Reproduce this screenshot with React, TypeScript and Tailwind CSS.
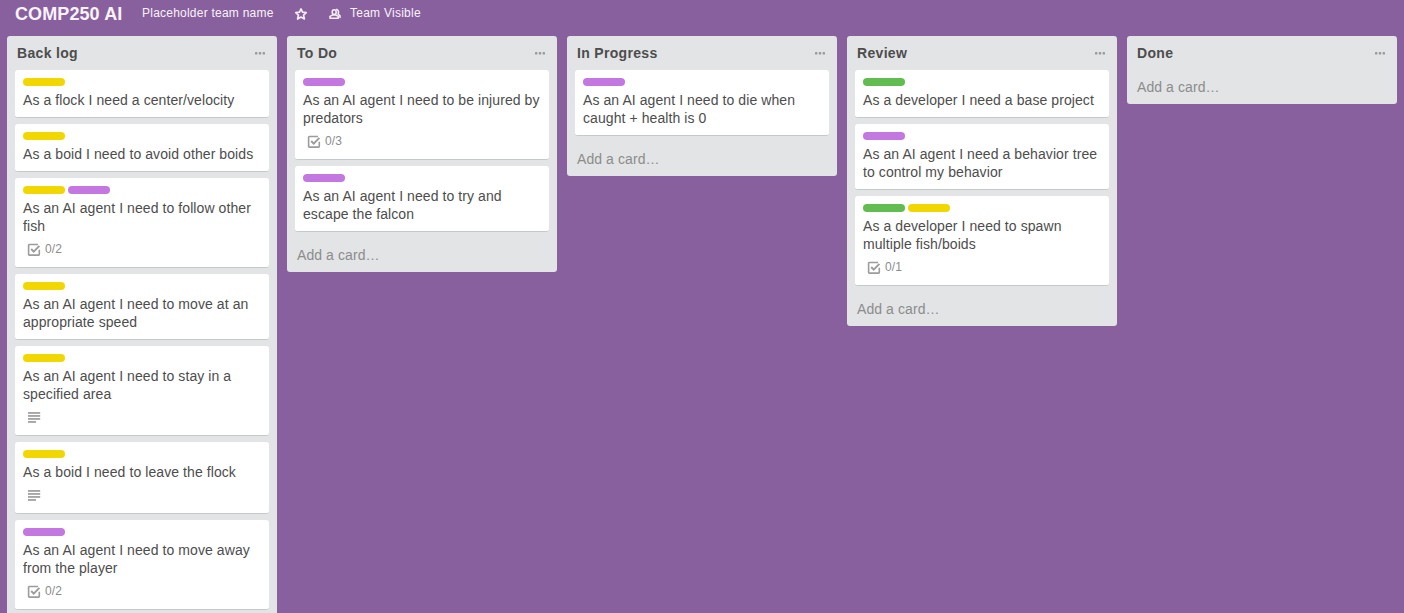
type Label = "yellow" | "purple" | "green";

interface CardData {
  labels: Label[];
  lines: string[];
  checklist?: string;
  description?: boolean;
}

interface ListData {
  title: string;
  cards: CardData[];
  open?: boolean;
}

const labelColor: Record<Label, string> = {
  yellow: "bg-[#f2d600]",
  purple: "bg-[#c377e0]",
  green: "bg-[#61bd4f]",
};

const lists: ListData[] = [
  {
    title: "Back log",
    open: true,
    cards: [
      { labels: ["yellow"], lines: ["As a flock I need a center/velocity"] },
      { labels: ["yellow"], lines: ["As a boid I need to avoid other boids"] },
      { labels: ["yellow", "purple"], lines: ["As an AI agent I need to follow other", "fish"], checklist: "0/2" },
      { labels: ["yellow"], lines: ["As an AI agent I need to move at an", "appropriate speed"] },
      { labels: ["yellow"], lines: ["As an AI agent I need to stay in a", "specified area"], description: true },
      { labels: ["yellow"], lines: ["As a boid I need to leave the flock"], description: true },
      { labels: ["purple"], lines: ["As an AI agent I need to move away", "from the player"], checklist: "0/2" },
    ],
  },
  {
    title: "To Do",
    cards: [
      { labels: ["purple"], lines: ["As an AI agent I need to be injured by", "predators"], checklist: "0/3" },
      { labels: ["purple"], lines: ["As an AI agent I need to try and", "escape the falcon"] },
    ],
  },
  {
    title: "In Progress",
    cards: [{ labels: ["purple"], lines: ["As an AI agent I need to die when", "caught + health is 0"] }],
  },
  {
    title: "Review",
    cards: [
      { labels: ["green"], lines: ["As a developer I need a base project"] },
      { labels: ["purple"], lines: ["As an AI agent I need a behavior tree", "to control my behavior"] },
      { labels: ["green", "yellow"], lines: ["As a developer I need to spawn", "multiple fish/boids"], checklist: "0/1" },
    ],
  },
  { title: "Done", cards: [] },
];

function StarIcon() {
  return (
    <svg width="14" height="14" viewBox="0 0 14 14" fill="none" stroke="#f3edf6" strokeWidth="1.7" strokeLinejoin="round">
      <path d="M7 1.9 8.5 5.2 12.2 5.6 9.6 8.1 10.4 12 7 10.1 3.6 12 4.4 8.1 1.8 5.6 5.5 5.2Z" />
    </svg>
  );
}

function TeamIcon() {
  return (
    <svg width="14" height="14" viewBox="0 0 14 14" fill="none" stroke="#f3edf6" strokeWidth="1.6" strokeLinejoin="round" strokeLinecap="round">
      <ellipse cx="6.2" cy="5.1" rx="2" ry="2.4" />
      <path d="M4.8 7.9 2 9.4V11.2H10.2V9.4L7.6 7.9Z" />
      <path d="M8.8 2.4C10.8 3 10.8 5.6 10.1 7.1L12 8.9V10.4" />
    </svg>
  );
}

function MenuIcon() {
  return (
    <svg width="12" height="4" viewBox="0 0 12 4" fill="#999">
      <rect x="1" y="1" width="2.4" height="2.6" rx="0.7" />
      <rect x="4.8" y="1" width="2.4" height="2.6" rx="0.7" />
      <rect x="8.6" y="1" width="2.4" height="2.6" rx="0.7" />
    </svg>
  );
}

function ChecklistIcon() {
  return (
    <svg width="14" height="14" viewBox="0 0 14 14" fill="none" stroke="#9c9c9c" strokeWidth="1.6">
      <path d="M11 1.5H2.3Q1.6 1.5 1.6 2.3V11.3Q1.6 12.1 2.3 12.1H11.6Q12.3 12.1 12.3 11.3V6.8" />
      <path d="M4.2 6 6.7 8.6 12.4 2.8" strokeWidth="1.9" />
    </svg>
  );
}

function DescriptionIcon() {
  return (
    <svg width="14" height="14" viewBox="0 0 14 14" fill="#9c9c9c">
      <rect x="1" y="1.1" width="12.2" height="1.7" />
      <rect x="1" y="4.1" width="12.2" height="1.7" />
      <rect x="1" y="7.1" width="12.2" height="1.7" />
      <rect x="1" y="10.1" width="8" height="1.7" />
    </svg>
  );
}

function Card({ card }: { card: CardData }) {
  return (
    <article className="rounded-[3px] border-b border-[#c4c9cc] bg-white px-2 pt-2 pb-2">
      <div className="mb-[5px] flex gap-[3px]">
        {card.labels.map((label) => (
          <span key={label} className={`h-2 w-[42px] rounded-[4px] ${labelColor[label]}`} />
        ))}
      </div>
      <p className="text-sm leading-[18px] tracking-[0.08px] whitespace-nowrap text-[#4d4d4d] [font-variant-ligatures:common-ligatures]">
        {card.lines.map((line) => (
          <span key={line} className="block">{line}</span>
        ))}
      </p>
      {(card.checklist || card.description) && (
        <div className="flex h-6 items-start pl-1 text-xs leading-[18px] text-[#8c8c8c]">
          <span className="mt-2">{card.checklist ? <ChecklistIcon /> : <DescriptionIcon />}</span>
          {card.checklist && <span className="mt-[5px] ml-1 tracking-[0.1px]">{card.checklist}</span>}
        </div>
      )}
    </article>
  );
}

function List({ list }: { list: ListData }) {
  return (
    <section className={`flex w-[270px] shrink-0 flex-col rounded-[3px] bg-[#e2e4e6] ${list.open ? "h-[620px]" : ""}`}>
      <header className="flex h-[34px] items-center justify-between pr-[11px] pl-[10px]">
        <h2 className="text-sm leading-[18px] font-bold tracking-[0.32px] text-[#4d4d4d]">{list.title}</h2>
        <MenuIcon />
      </header>
      <div className="flex flex-col gap-1.5 px-2">
        {list.cards.map((card) => (
          <Card key={card.lines[0]} card={card} />
        ))}
      </div>
      {!list.open && (
        <div className={`flex h-[34px] items-center pl-[10px] text-sm tracking-[0.08px] text-[#8c8c8c] ${list.cards.length ? "mt-1.5" : ""}`}>
          Add a card…
        </div>
      )}
    </section>
  );
}

export default function App() {
  return (
    <div className="h-[613px] w-[1404px] overflow-hidden bg-[#89609e] font-['Liberation_Sans',Arial,sans-serif]">
      <header className="flex h-9 items-start pl-[15px] text-[#f7f3f9]">
        <h1 className="mt-[3px] w-[127px] text-lg leading-[22px] font-bold tracking-[0.1px] whitespace-nowrap">COMP250 AI</h1>
        <span className="mt-1 w-[152px] text-xs leading-[18px] tracking-[0.23px] whitespace-nowrap">Placeholder team name</span>
        <span className="mt-[7px] w-[34px]"><StarIcon /></span>
        <span className="mt-[7px] w-[22px]"><TeamIcon /></span>
        <span className="mt-1 text-xs leading-[18px] tracking-[0.25px] whitespace-nowrap">Team Visible</span>
      </header>
      <main className="flex items-start gap-2.5 pl-[7px]">
        {lists.map((list) => (
          <List key={list.title} list={list} />
        ))}
      </main>
    </div>
  );
}
